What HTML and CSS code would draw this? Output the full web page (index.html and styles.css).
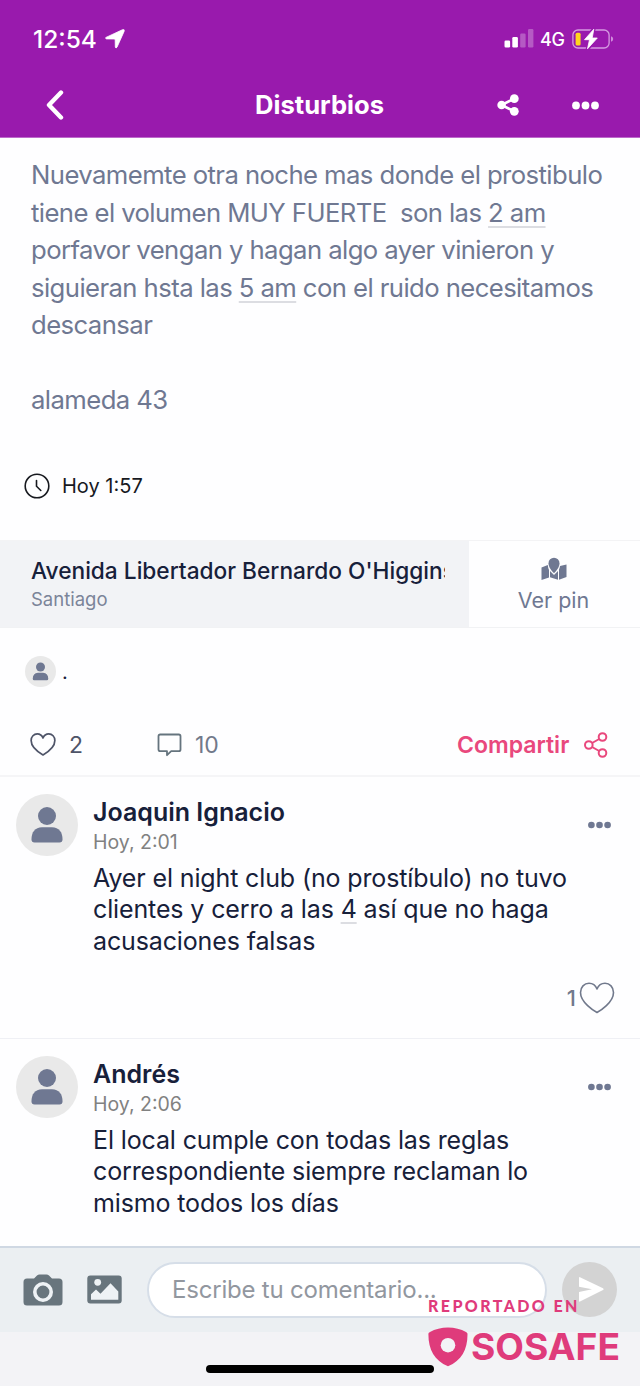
FILE: index.html
```html
<!DOCTYPE html>
<html lang="es">
<head>
<meta charset="utf-8">
<title>Disturbios</title>
<link rel="stylesheet" href="styles.css">
</head>
<body>
<svg class="defs" width="0" height="0" aria-hidden="true">
  <symbol id="person" viewBox="0 0 62 62"><circle cx="31" cy="22" r="9"/><path d="M15.500 45.500 Q15.500 34 26 33.300 H36 Q46.500 34 46.500 45.500 Q46.500 48.500 43.500 48.500 H18.500 Q15.500 48.500 15.500 45.500Z"/></symbol>
  <symbol id="heart" viewBox="0 0 36 32"><path d="M18 30.500 C15 28.800 1.500 20.500 1.500 10.500 C1.500 5 5.300 1.300 10 1.300 C14 1.300 16.800 4 18 7 C19.200 4 22 1.300 26 1.300 C30.700 1.300 34.500 5 34.500 10.500 C34.500 20.500 21 28.800 18 30.500Z" fill="none" stroke="currentColor" stroke-linejoin="round"/></symbol>
  <symbol id="dots" viewBox="0 0 27 9"><circle cx="4" cy="4.500" r="3.900"/><circle cx="13.500" cy="4.500" r="3.900"/><circle cx="23" cy="4.500" r="3.900"/></symbol>
</svg>
<div class="app">
  <header class="header">
    <div class="status">
      <span class="clock">12:54</span>
      <svg class="locate" width="20" height="20" viewBox="0 0 20 20"><path d="M1 8.400 L17.300.8 Q20 0 19.100 2.400 L12 18.200 Q10.800 20 10.300 18 L10.200 11 Q10.200 10 9.200 10 L1.500 9.900 Q-.3 9.200 1 8.400Z" fill="#fff" stroke="#fff" stroke-width=".8"/></svg>
      <svg class="signal" width="30" height="20" viewBox="0 0 30 20"><g fill="#fff"><rect x=".5" y="11.500" width="5.600" height="7" rx="1.300"/><rect x="8.300" y="8" width="5.600" height="10.500" rx="1.300"/><g opacity=".28"><rect x="16.200" y="4.500" width="5.400" height="14" rx="1.200"/><rect x="24" y="0" width="5.400" height="18.500" rx="1.200"/></g></g></svg>
      <span class="network">4G</span>
      <svg class="battery" width="42" height="22" viewBox="0 0 42 22"><rect x=".9" y="2" width="36.200" height="18" rx="5" fill="none" stroke="#d59be1" stroke-width="1.300"/><path d="M39 8.200 Q41.200 9 41.200 11 Q41.200 13 39 13.800Z" fill="#d08cdc"/><rect x="3.600" y="4.700" width="5" height="12.800" rx="1.500" fill="#ffd51e"/><path d="M21.800 1 L12.500 11.700 H17.500 L15.500 21 L25.300 10 H20.200Z" fill="#fff" stroke="#991aad" stroke-width="3.500"/><path d="M21.800 1.200 L12.500 11.700 H17.500 L15.500 20.800 L25.300 10 H20.200Z" fill="#fff" stroke="#fff" stroke-width=".8" stroke-linejoin="round"/></svg>
    </div>
    <div class="nav">
      <svg class="back" width="18" height="30" viewBox="0 0 18 30"><path d="M15 2.500 L3 15 L15 27.500" fill="none" stroke="#fff" stroke-width="4.400" stroke-linecap="round" stroke-linejoin="round"/></svg>
      <h1 class="title">Disturbios</h1>
      <svg class="nav-share" width="22" height="22" viewBox="0 0 22 22" fill="#fff" stroke="#fff"><path d="M17 4.800 L4.500 11 L17 17.200" fill="none" stroke-width="2.600"/><circle cx="4.600" cy="11" r="4.300" stroke="none"/><circle cx="17.300" cy="4.700" r="4.400" stroke="none"/><circle cx="17.300" cy="17.300" r="4.400" stroke="none"/></svg>
      <svg class="nav-more" width="27" height="9"><use href="#dots"/></svg>
    </div>
  </header>

  <main>
    <section class="post">
      <p class="description">Nuevamemte otra noche mas donde el prostibulo<br>tiene el volumen MUY FUERTE&nbsp; son las <span class="date">2 am</span><br>porfavor vengan y hagan algo ayer vinieron y<br>siguieran hsta las <span class="date">5 am</span> con el ruido necesitamos<br>descansar<br><br>alameda 43</p>
      <div class="posted">
        <svg width="26" height="26" viewBox="0 0 26 26" fill="none" stroke="#17191f" stroke-width="1.600" stroke-linecap="round"><circle cx="13" cy="13" r="11.800"/><path d="M12.500 7.500 V13.200 L16.800 17.500"/></svg>
        <span>Hoy 1:57</span>
      </div>
    </section>

    <section class="location">
      <div class="address"><div class="street">Avenida Libertador Bernardo O'Higgins</div><div class="city">Santiago</div></div>
      <div class="pin">
        <svg width="26" height="23" viewBox="0 0 26 23" fill="#6f7892"><path d="M.5 10.500 L6.800 8 Q7.200 12 8 13 V20.500 L.5 23Z"/><path d="M9 14 L13 18 L17 14 V22.800 L9 20.300Z"/><path d="M18 12.500 Q18.800 10.500 19 9 L25.500 7.500 V20 L18 22.700Z"/><path d="M13 16.200 C10.500 13.800 7.500 10 7.500 6.200 A5.500 5.500 0 0 1 18.500 6.200 C18.500 10 15.500 13.800 13 16.200Z"/></svg>
        <span>Ver pin</span>
      </div>
    </section>

    <section class="author"><svg class="avatar" width="31" height="31"><use href="#person"/></svg><span>.</span></section>

    <section class="actions">
      <svg class="like" width="26" height="23" stroke-width="2.400"><use href="#heart"/></svg><span class="like-count">2</span>
      <svg class="bubble" width="25" height="24" viewBox="0 0 25 24"><path d="M3.200 1.500 H21.800 Q23.500 1.500 23.500 3.200 V16.500 Q23.500 18.200 21.800 18.200 H14.200 L10 22.200 V18.200 H3.200 Q1.500 18.200 1.500 16.500 V3.200 Q1.500 1.500 3.200 1.500Z" fill="none" stroke="#65747e" stroke-width="1.800" stroke-linejoin="round"/></svg><span class="reply-count">10</span>
      <span class="share">Compartir</span>
      <svg class="share-icon" width="24" height="26" viewBox="0 0 24 26" fill="none" stroke="#e9487d" stroke-width="2"><circle cx="4.800" cy="13" r="3.800"/><circle cx="18.500" cy="5" r="3.800"/><circle cx="18.500" cy="21" r="3.800"/><path d="M8.100 11 L15.200 7 M8.100 15 L15.200 19"/></svg>
    </section>

    <article class="comment">
      <svg class="avatar" width="62" height="62"><use href="#person"/></svg>
      <div class="content">
        <h2>Joaquin Ignacio</h2>
        <time>Hoy, 2:01</time>
        <p>Ayer el night club (no prostíbulo) no tuvo<br>clientes y cerro a las <span class="date">4</span> así que no haga<br>acusaciones falsas</p>
        <div class="likes"><span>1</span><svg width="36" height="32" stroke-width="1.600"><use href="#heart"/></svg></div>
      </div>
      <svg class="more" width="23" height="8"><use href="#dots"/></svg>
    </article>

    <article class="comment last">
      <svg class="avatar" width="62" height="62"><use href="#person"/></svg>
      <div class="content">
        <h2>Andrés</h2>
        <time>Hoy, 2:06</time>
        <p>El local cumple con todas las reglas<br>correspondiente siempre reclaman lo<br>mismo todos los días</p>
      </div>
      <svg class="more" width="23" height="8"><use href="#dots"/></svg>
    </article>
  </main>

  <footer>
    <div class="composer">
      <svg class="camera" width="40" height="32" viewBox="0 0 40 32"><path d="M4 4.500 H11 L14 1.500 Q15 .5 16.500 .5 H23.500 Q25 .5 26 1.500 L29 4.500 H36 Q39.500 4.500 39.500 8 V28 Q39.500 31.500 36 31.500 H4 Q.5 31.500 .5 28 V8 Q.5 4.500 4 4.500Z" fill="#68757d"/><circle cx="20" cy="18" r="8.200" fill="#68757d" stroke="#eef2f5" stroke-width="3.600"/></svg>
      <svg class="picture" width="35" height="29" viewBox="0 0 35 29"><rect x=".3" y=".5" width="34.400" height="28" rx="3" fill="#68757d"/><path d="M4 24.800 V19.300 L9 14.500 L13.500 18.700 L23.500 8.300 L31.300 16.500 V24.800Z" fill="#eef2f5"/><circle cx="10.700" cy="7.300" r="3.400" fill="#eef2f5"/></svg>
      <div class="input">Escribe tu comentario...</div>
      <svg class="send" width="55" height="55" viewBox="0 0 55 55"><circle cx="27.500" cy="27.500" r="27.500" fill="#d3d3d3"/><path d="M17 15.500 Q17 14.800 18 15.200 L41 26.200 Q42.500 27.200 41 28.100 L18 39.500 Q17 40 17 39 V30 L30 27.200 L17 24.700Z" fill="#fff"/></svg>
    </div>
    <div class="home"><div class="home-bar"></div></div>
  </footer>

  <aside class="brand">
    <div class="reported">REPORTADO EN</div>
    <div class="logo"><svg width="40" height="40" viewBox="0 0 40 40"><path d="M.4 7.200 C.4 6.100 1 5.500 2 5 C7 2.200 13.500 .5 20 .5 C26.500 .5 33 2.200 38 5 C39 5.500 39.500 6.200 39.500 7.200 C39.500 23 33.500 33.500 20 39.200 C6.500 33.500 .4 23 .4 7.200Z" fill="#df3b7b"/><circle cx="20" cy="18.200" r="7.300" fill="#f3f3f6"/></svg><span>SOSAFE</span></div>
  </aside>
</div>
</body>
</html>
```

FILE: styles.css
```css
* { box-sizing: border-box; }
body { margin: 0; background: #fefeff; font-family: Inter, "Liberation Sans", sans-serif; color: #17203a; }
svg { display: block; flex: none; }
.defs { position: absolute; }
h1, h2, p { margin: 0; }
span, time { white-space: nowrap; flex: none; }
.app { position: relative; width: 640px; height: 1386px; overflow: hidden; display: flex; flex-direction: column; }

.header { height: 138px; background: #991aad; color: #fff; flex: none; border-bottom: 1px solid #bd6acb; }
.status { height: 77px; display: flex; align-items: center; padding-left: 33px; }
.clock { width: 72px; font-size: 24.500px; font-weight: 550; }
.signal { margin-left: 379px; }
.network { width: 38px; padding: 1px 0 0 6px; font-size: 18px; font-weight: 500; letter-spacing: -.3px; }
.nav { height: 56px; display: flex; align-items: center; padding-left: 46px; }
.title { width: 131px; margin-left: 191px; font-size: 25.600px; line-height: 32px; font-weight: 700; white-space: nowrap; }
.nav-share { margin-left: 111px; }
.nav-more { margin-left: 53px; fill: #fff; }

.post { height: 402px; padding: 18px 0 0 31px; }
.description { color: #6f7892; font-size: 25.700px; line-height: 37.500px; letter-spacing: -.58px; white-space: nowrap; }
.date { text-decoration: underline 1.500px #dcdde2; text-underline-offset: 4px; text-decoration-skip-ink: none; }
.posted { display: flex; align-items: center; gap: 12px; margin: 52px 0 0 -7px; height: 30px; font-size: 20px; color: #17191f; }

.location { height: 88px; display: flex; border-top: 1px solid #f3f3f5; border-bottom: 1px solid #f1f2f4; }
.address { width: 469px; padding: 13px 24px 0 31px; background: #f2f3f6; }
.street { overflow: hidden; white-space: nowrap; font-size: 22.700px; line-height: 33px; font-weight: 500; }
.city { font-size: 18.500px; line-height: 25px; color: #7b8499; }
.pin { flex: 1; display: flex; flex-direction: column; align-items: center; padding: 16px 2px 0 0; color: #6f7892; font-size: 21.500px; line-height: 28px; }
.pin span { margin-top: 6px; }

.author { height: 86px; padding: 28px 0 0 25px; display: flex; align-items: flex-start; gap: 6px; font-size: 20px; line-height: 32px; }
.avatar { border-radius: 50%; background: #e9e9e9; fill: #6f7892; }
.actions { height: 63px; display: flex; align-items: center; padding-left: 30px; font-size: 23px; color: #4e5468; border-bottom: 2px solid #f5f5f7; }
.like-count { width: 101px; padding-left: 13px; }
.reply-count { width: 275px; padding-left: 13px; color: #71798a; }
.share { width: 112px; font-weight: 600; color: #e9487d; }
.share-icon { margin-left: 15px; }

.comment { height: 262px; display: flex; padding: 17px 0 0 15.500px; border-bottom: 1px solid #eff0f5; }
.comment.last { height: 207px; border: 0; }
.content { width: 522px; margin-left: 15.500px; }
.comment h2 { height: 34px; line-height: 36px; font-size: 25px; font-weight: 600; color: #17203a; white-space: nowrap; }
.comment time { display: block; height: 35px; line-height: 28px; font-size: 19.500px; color: #818181; }
.comment p { color: #17203a; font-size: 25px; line-height: 31.300px; letter-spacing: -.13px; white-space: nowrap; }
.likes { display: flex; align-items: center; justify-content: flex-end; gap: 3px; margin-top: 24px; font-size: 22px; font-weight: 500; color: #71798c; height: 34px; }
.more { fill: #6f7892; margin: 27px 0 0 -27px; }

.composer { height: 86px; background: #ebeff2; border-top: 2px solid #cfd8e3; display: flex; align-items: center; padding: 0 0 1px 23px; }
.picture { margin-left: 24px; }
.input { width: 400px; height: 56px; margin-left: 25px; padding-left: 23px; border: 2px solid #d6dee8; border-radius: 28px; background: #fff; color: #92979f; font-size: 24px; letter-spacing: -.2px; line-height: 52px; white-space: nowrap; }
.send { margin-left: 15px; }
.home { height: 54px; background: #f3f3f6; display: flex; justify-content: center; padding-top: 33px; }
.home-bar { width: 228px; height: 8px; border-radius: 4px; background: #000; }

.brand { position: absolute; left: 428px; top: 1296px; color: #df3b7b; font-weight: 750; white-space: nowrap; }
.reported { font-family: Lato, sans-serif; font-size: 16px; line-height: 20px; letter-spacing: 2.400px; font-weight: 900; }
.logo { display: flex; align-items: center; gap: 3px; margin-top: 10px; font-size: 37.200px; line-height: 42px; }
```
